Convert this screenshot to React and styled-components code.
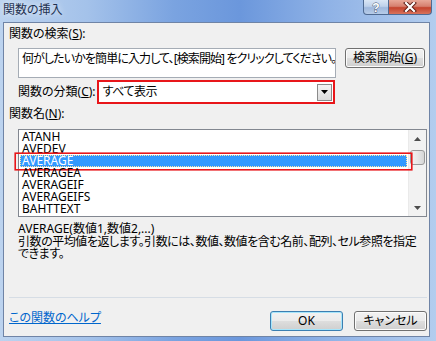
import React from "react";
import styled, { createGlobalStyle } from "styled-components";

const GlobalStyle = createGlobalStyle`
  html, body {
    margin: 0;
    padding: 0;
    background: #ffffff;
  }
  body {
    font-family: "Noto Sans", "Noto Sans CJK JP", sans-serif;
    font-size: 12px;
    font-feature-settings: "palt";
    color: #000;
  }
`;

const Window = styled.div`
  width: 436px;
  height: 341px;
  display: flex;
  flex-direction: column;
  box-sizing: border-box;
  background: linear-gradient(90deg, #bcd3ef 0%, #a4c2ea 20%, #7aa3e0 40%, #6b97dc 55%, #8fb2e6 75%, #b3cdee 100%);
  overflow: hidden;
`;

const TitleBar = styled.div`
  height: 22px;
  display: flex;
  align-items: flex-start;
  padding-left: 3px;
  flex-shrink: 0;
`;

const Title = styled.div`
  font-family: "Noto Sans CJK JP", sans-serif;
  font-size: 12px;
  line-height: 14px;
  margin-top: 2px;
  color: #1e3050;
  text-shadow: 0 0 6px rgba(255, 255, 255, 0.9);
`;

const Controls = styled.div`
  margin-left: auto;
  margin-right: 4px;
  display: flex;
`;

const CaptionButton = styled.div`
  width: ${(p) => p.w}px;
  height: 15px;
  box-sizing: border-box;
  border: 1px solid #4f6a92;
  border-top: none;
  display: flex;
  align-items: center;
  justify-content: center;
  background: ${(p) =>
    p.close
      ? "linear-gradient(180deg, #e8a898 0%, #d6806f 45%, #c4432d 55%, #d8735c 100%)"
      : "linear-gradient(180deg, #dae6f5 0%, #bed1eb 45%, #9fb8dd 55%, #b7cce9 100%)"};
  border-radius: ${(p) => (p.close ? "0 0 4px 0" : "0 0 0 4px")};
  border-left: ${(p) => (p.close ? "none" : "1px solid #4f6a92")};
`;

const Client = styled.div`
  flex: 1;
  margin: 0 6px 4px 3px;
  border: 1px solid #6f84a6;
  background: #f0f0f0;
  display: flex;
  flex-direction: column;
  padding: 4px 2px 0 5px;
`;

const Label = styled.div`
  line-height: 14px;
  height: 14px;
  white-space: nowrap;
`;

const Key = styled.span`
  text-decoration: underline;
`;

const SearchRow = styled.div`
  display: flex;
  align-items: flex-start;
  margin-top: 7px;
  padding-left: 9px;
`;

const SearchBox = styled.div`
  width: 318px;
  height: 30px;
  box-sizing: border-box;
  border: 1px solid #a5acb5;
  background: #fff;
  padding: 3px 3px;
  line-height: 13px;
  letter-spacing: -0.9px;
  white-space: nowrap;
  overflow: hidden;
`;

const PushButton = styled.div`
  width: ${(p) => p.w || 80}px;
  height: ${(p) => p.h || 20}px;
  box-sizing: border-box;
  margin-left: ${(p) => p.gap || 0}px;
  border: 1px solid ${(p) => (p.focus ? "#3c7fb1" : "#707070")};
  border-radius: 3px;
  background: linear-gradient(180deg, #f2f2f2 0%, #ebebeb 48%, #dddddd 52%, #cfcfcf 100%);
  box-shadow: inset 0 0 0 1px ${(p) => (p.focus ? "#a6e5fb" : "#fcfcfc")};
  display: flex;
  align-items: center;
  justify-content: center;
  line-height: 14px;
  white-space: nowrap;
`;

const CategoryRow = styled.div`
  display: flex;
  align-items: center;
  margin-top: 2px;
  padding-left: 9px;
  height: 24px;
`;

const SelectBox = styled.div`
  margin-left: 1px;
  width: 238px;
  height: 24px;
  box-sizing: border-box;
  border: 2px solid #e8161a;
  background: #fff;
  display: flex;
  align-items: center;
  padding: 1px 1px 1px 4px;
`;

const SelectText = styled.div`
  flex: 1;
  line-height: 14px;
  letter-spacing: -0.5px;
`;

const DropButton = styled.div`
  width: 15px;
  height: 17px;
  box-sizing: border-box;
  border: 1px solid #8b8b8b;
  background: linear-gradient(180deg, #f4f4f4 0%, #dcdcdc 100%);
  display: flex;
  align-items: center;
  justify-content: center;
`;

const NameLabel = styled(Label)`
  margin-top: 3px;
`;

const ListBox = styled.div`
  margin: 8px 0 0 9px;
  width: 409px;
  height: 88px;
  box-sizing: border-box;
  border: 1px solid #828790;
  background: #fff;
  display: flex;
`;

const Items = styled.div`
  flex: 1;
  padding: 1px 1px 0 1px;
`;

const Item = styled.div`
  position: relative;
  height: 12px;
  line-height: 12px;
  padding-left: 2px;
  box-sizing: border-box;
  color: ${(p) => (p.selected ? "#fff" : "#000")};
  background: ${(p) => (p.selected ? "#3399ff" : "transparent")};
  outline: ${(p) => (p.selected ? "1px dotted #ffe7a0" : "none")};
  outline-offset: -1px;
`;

const Marker = styled.div`
  position: absolute;
  left: -5px;
  right: -5px;
  top: -2px;
  bottom: -3px;
  border: 1px solid #e8161a;
  box-shadow: 0 0 0 0.6px #e8161a;
  pointer-events: none;
`;

const ScrollBar = styled.div`
  width: 17px;
  background: #f2f2f2;
  border-left: 1px solid #eaeaea;
  display: flex;
  flex-direction: column;
  align-items: center;
`;

const Arrow = styled.div`
  height: 17px;
  width: 100%;
  display: flex;
  align-items: center;
  justify-content: center;
`;

const Thumb = styled.div`
  width: 15px;
  height: 15px;
  margin-top: 3px;
  box-sizing: border-box;
  border: 1px solid #9a9a9a;
  border-radius: 3px;
  background: linear-gradient(90deg, #f3f3f3 0%, #e8e8e8 50%, #d6d6d6 100%);
`;

const Track = styled.div`
  flex: 1;
`;

const Signature = styled.div`
  margin: 5px 0 0 9px;
  line-height: 14px;
`;

const Description = styled.div`
  margin: 0 0 0 9px;
  width: 412px;
  line-height: 12px;
  letter-spacing: -0.45px;
  white-space: nowrap;
`;

const Separator = styled.div`
  margin: auto 0 0 0;
  height: 1px;
  width: 418px;
  background: #d6dde5;
`;

const Footer = styled.div`
  display: flex;
  align-items: flex-start;
  margin-top: 13px;
  margin-bottom: 5px;
  height: 20px;
`;

const HelpLink = styled.a`
  color: #0066cc;
  text-decoration: underline;
  line-height: 14px;
  cursor: pointer;
`;

const Spacer = styled.div`
  flex: 1;
`;

const Tri = ({ up }) => (
  <svg width="7" height="4" viewBox="0 0 7 4">
    <path d={up ? "M0 4 L3.5 0 L7 4 Z" : "M0 0 L3.5 4 L7 0 Z"} fill="#4d4d4d" />
  </svg>
);

const names = ["ATANH", "AVEDEV", "AVERAGE", "AVERAGEA", "AVERAGEIF", "AVERAGEIFS", "BAHTTEXT"];

export default function App() {
  return (
    <>
      <GlobalStyle />
      <Window>
        <TitleBar>
          <Title>関数の挿入</Title>
          <Controls>
            <CaptionButton w={26}>
              <svg width="12" height="13" viewBox="0 0 12 13">
                <text x="6" y="11" textAnchor="middle" fontSize="12" fontWeight="bold" fontFamily="Liberation Sans" fill="#fff" stroke="#34496a" strokeWidth="0.8" paintOrder="stroke">?</text>
              </svg>
            </CaptionButton>
            <CaptionButton w={43} close>
              <svg width="14" height="10" viewBox="0 0 14 10">
                <path d="M3 1 L11 9 M11 1 L3 9" stroke="#5a1c14" strokeWidth="4" strokeLinecap="square" />
                <path d="M3 1 L11 9 M11 1 L3 9" stroke="#fff" strokeWidth="2.2" strokeLinecap="square" />
              </svg>
            </CaptionButton>
          </Controls>
        </TitleBar>
        <Client>
          <Label>関数の検索(<Key>S</Key>):</Label>
          <SearchRow>
            <SearchBox>何がしたいかを簡単に入力して、[検索開始] をクリックしてください。</SearchBox>
            <PushButton w={80} gap={9}>検索開始(<Key>G</Key>)</PushButton>
          </SearchRow>
          <CategoryRow>
            <Label>関数の分類(<Key>C</Key>):</Label>
            <SelectBox>
              <SelectText>すべて表示</SelectText>
              <DropButton>
                <svg width="7" height="4" viewBox="0 0 7 4">
                  <path d="M0 0 L3.5 4 L7 0 Z" fill="#000" />
                </svg>
              </DropButton>
            </SelectBox>
          </CategoryRow>
          <NameLabel>関数名(<Key>N</Key>):</NameLabel>
          <ListBox>
            <Items>
              {names.map((n) => (
                <Item key={n} selected={n === "AVERAGE"}>
                  {n}
                  {n === "AVERAGE" && <Marker />}
                </Item>
              ))}
            </Items>
            <ScrollBar>
              <Arrow><Tri up /></Arrow>
              <Thumb />
              <Track />
              <Arrow><Tri /></Arrow>
            </ScrollBar>
          </ListBox>
          <Signature>AVERAGE(数値1,数値2,...)</Signature>
          <Description>
            引数の平均値を返します。引数には、数値、数値を含む名前、配列、セル参照を指定
            <br />
            できます。
          </Description>
          <Separator />
          <Footer>
            <HelpLink>この関数のヘルプ</HelpLink>
            <Spacer />
            <PushButton w={73} focus>OK</PushButton>
            <PushButton w={73} gap={11}>キャンセル</PushButton>
          </Footer>
        </Client>
      </Window>
    </>
  );
}
